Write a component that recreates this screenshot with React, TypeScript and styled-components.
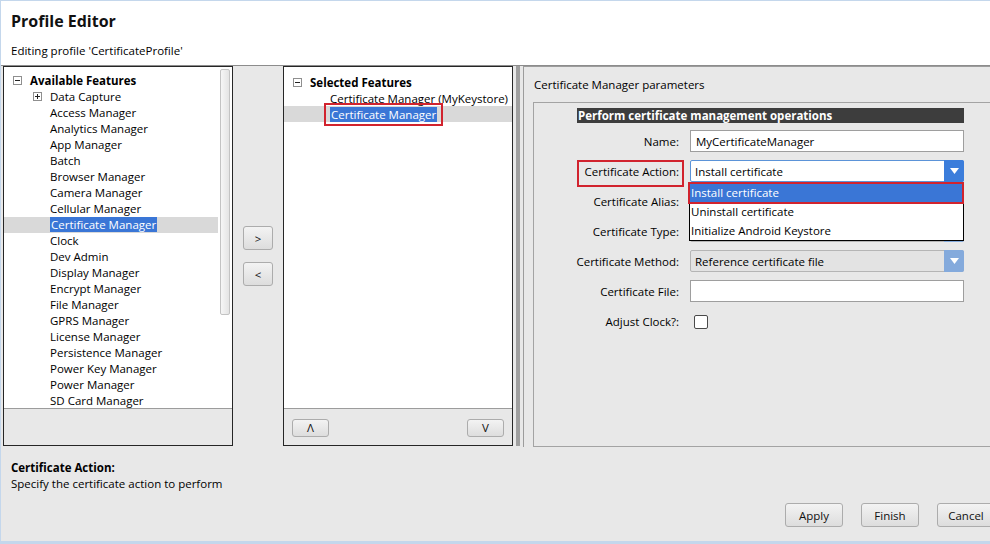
import React from 'react';
import styled, { createGlobalStyle, css } from 'styled-components';

const FONT = `"Open Sans", "Noto Sans", "Liberation Sans", sans-serif`;

const Global = createGlobalStyle`
  html, body { margin: 0; padding: 0; overflow: hidden; background: #e8e8e8; }
  body { font-family: ${FONT}; font-size: 11.5px; color: #000; }
  #root { width: 990px; height: 544px; overflow: hidden; }
`;

const Window = styled.div`
  width: 1000px;
  height: 544px;
  box-sizing: border-box;
  border-top: 1px solid #c4d7ec;
  border-left: 1px solid #c4d7ec;
  border-bottom: 3px solid #c4d7ec;
  background: #e8e8e8;
  display: flex;
  flex-direction: column;
  overflow: hidden;
`;

const Header = styled.header`
  height: 65px;
  box-sizing: border-box;
  background: #fff;
  border-bottom: 1px solid #8c8c8c;
  padding: 10px 0 0 10px;
  display: flex;
  flex-direction: column;
`;

const Title = styled.h1`
  margin: 0;
  font-size: 16px;
  line-height: 20px;
  font-weight: 700;
  color: #111;
`;

const Subtitle = styled.div`
  margin-top: 12px;
  line-height: 16px;
`;

const Main = styled.div`
  height: 381px;
  display: flex;
  padding-left: 2px;
`;

const Panel = styled.section<{ $w: number }>`
  width: ${p => p.$w}px;
  height: 380px;
  box-sizing: border-box;
  border: 1px solid #262626;
  display: flex;
  flex-direction: column;
  flex: none;
`;

const TreeArea = styled.div`
  height: 341px;
  background: #fff;
  display: flex;
  border-bottom: 1px solid #9c9c9c;
`;

const TreeList = styled.div<{ $top: number }>`
  flex: 1;
  padding-top: ${p => p.$top}px;
  display: flex;
  flex-direction: column;
`;

const Row = styled.div<{ $indent: number; $selected?: boolean }>`
  height: 16px;
  display: flex;
  align-items: center;
  padding-left: ${p => p.$indent}px;
  line-height: 15px;
  white-space: nowrap;
  ${p => p.$selected && css`background: #d9d9d9;`}
`;

const Expander = styled.span<{ $plus?: boolean }>`
  width: 9px;
  height: 9px;
  box-sizing: border-box;
  border: 1px solid #8f8f8f;
  background: #fff;
  margin-right: 8px;
  position: relative;
  flex: none;
  &::before {
    content: '';
    position: absolute;
    left: 1px; right: 1px; top: 3px;
    height: 1px;
    background: #222;
  }
  ${p => p.$plus && css`
    &::after {
      content: '';
      position: absolute;
      top: 1px; bottom: 1px; left: 3px;
      width: 1px;
      background: #222;
    }
  `}
`;

const GroupLabel = styled.span`
  font-weight: 700;
`;

const SelText = styled.span<{ $boxed?: boolean }>`
  background: #3a76d6;
  color: #fff;
  padding: 0 1px;
  line-height: 15px;
  position: relative;
  ${p => p.$boxed && css`
    &::after {
      content: '';
      position: absolute;
      left: -6px; right: -6px; top: -4px; bottom: -4px;
      border: 2px solid #d1232e;
    }
  `}
`;

const ScrollCol = styled.div`
  width: 14px;
  padding: 2px 2px 0 2px;
  box-sizing: border-box;
  flex: none;
`;

const Thumb = styled.div`
  height: 246px;
  box-sizing: border-box;
  border: 1px solid #c3c3c3;
  border-radius: 2px;
  background: linear-gradient(to right, #f6f6f6, #e4e4e4);
`;

const PanelFooter = styled.div`
  flex: 1;
  display: flex;
  align-items: center;
  justify-content: space-between;
  padding: 1px 8px 0 8px;
`;

const Btn = styled.button<{ $w: number; $h: number }>`
  width: ${p => p.$w}px;
  height: ${p => p.$h}px;
  box-sizing: border-box;
  border: 1px solid #acacac;
  border-radius: 3px;
  background: linear-gradient(#f3f3f3, #dddddd);
  font-family: ${FONT};
  font-size: 11.5px;
  color: #111;
  padding: 0;
  display: flex;
  align-items: center;
  justify-content: center;
  flex: none;
`;

const MoveCol = styled.div`
  width: 50px;
  flex: none;
  display: flex;
  flex-direction: column;
  gap: 12px;
  padding: 160px 0 0 10px;
  box-sizing: border-box;
`;

const Splitter = styled.div`
  width: 10px;
  flex: none;
  display: flex;
  justify-content: center;
`;

const Grip = styled.div`
  width: 4px;
  height: 380px;
  background-image: radial-gradient(circle, #9a9a9a 0.7px, transparent 0.8px);
  background-size: 2px 2px;
`;

const RightPanel = styled.section`
  flex: 1;
  box-sizing: border-box;
  border: 1px solid #9c9c9c;
  border-bottom: none;
  display: flex;
  flex-direction: column;
`;

const RightTitle = styled.div`
  height: 35px;
  padding-left: 10px;
  display: flex;
  align-items: center;
  padding-bottom: 1px;
  box-sizing: border-box;
`;

const Group = styled.div`
  flex: 1;
  margin-left: 9px;
  border: 1px solid #a3a3a3;
  border-right: none;
  padding: 5px 0 0 43px;
  display: flex;
  flex-direction: column;
`;

const Banner = styled.div`
  width: 387px;
  height: 15px;
  background: #3d3d3d;
  color: #fff;
  font-weight: 700;
  line-height: 15px;
  padding-left: 1px;
  box-sizing: border-box;
`;

const Form = styled.div`
  margin-top: 7px;
  display: grid;
  grid-template-columns: 103px 274px;
  grid-auto-rows: 23px;
  column-gap: 10px;
  row-gap: 7px;
`;

const Label = styled.div<{ $boxed?: boolean }>`
  display: flex;
  align-items: center;
  justify-content: flex-end;
  padding-right: 1px;
  white-space: nowrap;
  position: relative;
  ${p => p.$boxed && css`
    &::after {
      content: '';
      position: absolute;
      left: 0; right: -4px; top: 0; bottom: -4px;
      border: 2px solid #d1232e;
    }
  `}
`;

const TextInput = styled.div`
  height: 22px;
  box-sizing: border-box;
  border: 1px solid #9e9e9e;
  background: #fff;
  display: flex;
  align-items: center;
  padding-left: 5px;
`;

const Combo = styled.div<{ $active?: boolean }>`
  height: 22px;
  box-sizing: border-box;
  border: 1px solid ${p => (p.$active ? '#5b93d8' : '#b5b5b5')};
  border-radius: 2px;
  background: ${p => (p.$active ? '#fff' : '#e3e3e3')};
  display: flex;
  align-items: center;
  position: relative;
`;

const ComboText = styled.span`
  flex: 1;
  padding-left: 4px;
`;

const ComboArrow = styled.span<{ $active?: boolean }>`
  width: 20px;
  align-self: stretch;
  margin: -1px -1px -1px 0;
  border-radius: 0 2px 2px 0;
  background: ${p => (p.$active ? '#3b7ddb' : '#84aadc')};
  display: flex;
  align-items: center;
  justify-content: center;
`;

const DropList = styled.div`
  position: absolute;
  left: -2px;
  top: 21px;
  width: 275px;
  box-sizing: border-box;
  border: 1px solid #000;
  background: #fff;
  padding: 0;
  z-index: 5;
`;

const DropItem = styled.div<{ $selected?: boolean }>`
  height: 19px;
  line-height: 19px;
  padding-left: 1px;
  position: relative;
  ${p => p.$selected && css`
    background: #3a76d6;
    color: #fff;
    &::after {
      content: '';
      position: absolute;
      left: -2px; right: -1px; top: -1px; bottom: -2px;
      border: 2px solid #d1232e;
    }
  `}
`;

const CheckBox = styled.span`
  width: 14px;
  height: 14px;
  box-sizing: border-box;
  border: 1px solid #4a4a4a;
  border-radius: 2px;
  background: #fff;
  margin-left: 4px;
`;

const CheckCell = styled.div`
  display: flex;
  align-items: center;
`;

const Bottom = styled.div`
  flex: 1;
  display: flex;
  flex-direction: column;
  padding: 13px 5px 0 10px;
`;

const HelpTitle = styled.div`
  font-weight: 700;
  line-height: 16px;
`;

const HelpText = styled.div`
  line-height: 16px;
`;

const ButtonBar = styled.div`
  margin-top: 11px;
  display: flex;
  justify-content: flex-end;
  gap: 18px;
`;

const Arrow = ({ color = '#fff' }: { color?: string }) => (
  <svg width="9" height="6" viewBox="0 0 9 6">
    <path d="M0 0 L9 0 L4.5 6 Z" fill={color} />
  </svg>
);

const available = [
  'Access Manager', 'Analytics Manager', 'App Manager', 'Batch', 'Browser Manager',
  'Camera Manager', 'Cellular Manager', 'Certificate Manager', 'Clock', 'Dev Admin',
  'Display Manager', 'Encrypt Manager', 'File Manager', 'GPRS Manager', 'License Manager',
  'Persistence Manager', 'Power Key Manager', 'Power Manager', 'SD Card Manager',
];

export default function App() {
  return (
    <>
      <Global />
      <Window>
        <Header>
          <Title>Profile Editor</Title>
          <Subtitle>Editing profile 'CertificateProfile'</Subtitle>
        </Header>
        <Main>
          <Panel $w={230}>
            <TreeArea>
              <TreeList $top={6}>
                <Row $indent={9}>
                  <Expander />
                  <GroupLabel>Available Features</GroupLabel>
                </Row>
                <Row $indent={29}>
                  <Expander $plus />
                  Data Capture
                </Row>
                {available.map(name =>
                  name === 'Certificate Manager' ? (
                    <Row key={name} $indent={46} $selected>
                      <SelText>{name}</SelText>
                    </Row>
                  ) : (
                    <Row key={name} $indent={46}>{name}</Row>
                  ),
                )}
              </TreeList>
              <ScrollCol>
                <Thumb />
              </ScrollCol>
            </TreeArea>
            <PanelFooter />
          </Panel>
          <MoveCol>
            <Btn $w={30} $h={24}>&gt;</Btn>
            <Btn $w={30} $h={24}>&lt;</Btn>
          </MoveCol>
          <Panel $w={230}>
            <TreeArea>
              <TreeList $top={7}>
                <Row $indent={9}>
                  <Expander />
                  <GroupLabel>Selected Features</GroupLabel>
                </Row>
                <Row $indent={46}>Certificate Manager (MyKeystore)</Row>
                <Row $indent={46} $selected>
                  <SelText $boxed>Certificate Manager</SelText>
                </Row>
              </TreeList>
            </TreeArea>
            <PanelFooter>
              <Btn $w={37} $h={18}>Λ</Btn>
              <Btn $w={37} $h={18}>V</Btn>
            </PanelFooter>
          </Panel>
          <Splitter>
            <Grip />
          </Splitter>
          <RightPanel>
            <RightTitle>Certificate Manager parameters</RightTitle>
            <Group>
              <Banner>Perform certificate management operations</Banner>
              <Form>
                <Label>Name:</Label>
                <TextInput>MyCertificateManager</TextInput>

                <Label $boxed>Certificate Action:</Label>
                <Combo $active>
                  <ComboText>Install certificate</ComboText>
                  <ComboArrow $active><Arrow /></ComboArrow>
                  <DropList>
                    <DropItem $selected>Install certificate</DropItem>
                    <DropItem>Uninstall certificate</DropItem>
                    <DropItem>Initialize Android Keystore</DropItem>
                  </DropList>
                </Combo>

                <Label>Certificate Alias:</Label>
                <TextInput />

                <Label>Certificate Type:</Label>
                <Combo>
                  <ComboText />
                  <ComboArrow><Arrow /></ComboArrow>
                </Combo>

                <Label>Certificate Method:</Label>
                <Combo>
                  <ComboText>Reference certificate file</ComboText>
                  <ComboArrow><Arrow /></ComboArrow>
                </Combo>

                <Label>Certificate File:</Label>
                <TextInput />

                <Label>Adjust Clock?:</Label>
                <CheckCell><CheckBox /></CheckCell>
              </Form>
            </Group>
          </RightPanel>
        </Main>
        <Bottom>
          <HelpTitle>Certificate Action:</HelpTitle>
          <HelpText>Specify the certificate action to perform</HelpText>
          <ButtonBar>
            <Btn $w={58} $h={24}>Apply</Btn>
            <Btn $w={58} $h={24}>Finish</Btn>
            <Btn $w={58} $h={24}>Cancel</Btn>
          </ButtonBar>
        </Bottom>
      </Window>
    </>
  );
}
